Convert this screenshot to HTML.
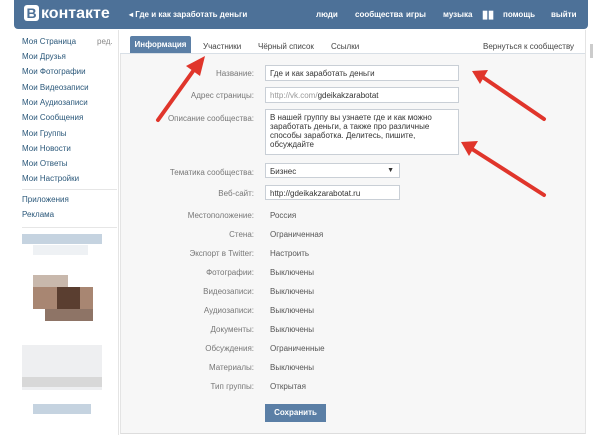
<!DOCTYPE html>
<html><head><meta charset="utf-8"><style>
body{margin:0;width:600px;height:440px;background:#fff;font-family:"Liberation Sans","Noto Sans CJK SC",sans-serif;position:relative;overflow:hidden;font-size:8px;color:#444}
.hdr{position:absolute;left:14px;top:0;width:574px;height:29px;background:#4d7198;border-radius:0 0 4px 4px}
.hdr span{position:absolute;color:#fff;font-weight:bold;font-size:8px;top:10px}
.logo{position:absolute;left:10px;top:5px;color:#fff;font-size:16px;font-weight:bold}
.logo b{display:inline-block;background:#fff;color:#4d7198;width:15px;height:16px;text-align:center;border-radius:3px;font-size:14px;line-height:16px;margin-right:2px}
.m{position:absolute;left:22px;color:#2b587a;font-size:8px}
.panel{position:absolute;left:120px;top:30px;width:464px;height:403px;background:#f7f7f7;border-left:1px solid #e4e4e4;border-right:1px solid #e4e4e4;border-bottom:1px solid #ddd}
.tabs{position:absolute;left:120px;top:30px;width:465px;height:23px;background:#fff;border-bottom:1px solid #d8dfe6}
.t{position:absolute;top:42px;font-size:8px;color:#444}
.l{position:absolute;right:346px;font-size:8px;color:#777;text-align:right;white-space:nowrap}
.v{position:absolute;left:270px;font-size:8px;color:#555}
.in{position:absolute;left:265px;background:#fff;border:1px solid #c9cfd6;font-size:8px;color:#333;padding:3px 4px;box-sizing:border-box}
</style></head><body>
<div class="hdr">
<div class="logo"><b>B</b>контакте</div>
<span style="left:115px">◂ Где и как заработать деньги</span>
<span style="left:302px">люди</span><span style="left:341px">сообщества</span><span style="left:392px">игры</span><span style="left:429px">музыка</span>
<span style="left:468px;top:8px;font-size:11px">▮▮</span>
<span style="left:489px">помощь</span><span style="left:537px">выйти</span>
</div>
<div class="m" style="top:37px">Моя Страница</div><div class="m" style="top:37px;left:97px;color:#888">ред.</div>
<div class="m" style="top:52px">Мои Друзья</div>
<div class="m" style="top:67px">Мои Фотографии</div>
<div class="m" style="top:83px">Мои Видеозаписи</div>
<div class="m" style="top:98px">Мои Аудиозаписи</div>
<div class="m" style="top:113px">Мои Сообщения</div>
<div class="m" style="top:129px">Мои Группы</div>
<div class="m" style="top:144px">Мои Новости</div>
<div class="m" style="top:159px">Мои Ответы</div>
<div class="m" style="top:174px">Мои Настройки</div>
<div style="position:absolute;left:22px;top:189px;width:95px;border-top:1px solid #e6e6e6"></div>
<div class="m" style="top:195px">Приложения</div>
<div class="m" style="top:210px">Реклама</div>
<div style="position:absolute;left:22px;top:227px;width:95px;border-top:1px solid #e6e6e6"></div>
<div style="position:absolute;left:22px;top:234px;width:80px;height:10px;background:#c5d3e0"></div>
<div style="position:absolute;left:33px;top:245px;width:55px;height:10px;background:#eef1f4"></div>
<div style="position:absolute;left:33px;top:275px;width:35px;height:12px;background:#c8b8ac"></div>
<div style="position:absolute;left:33px;top:287px;width:60px;height:22px;background:#a88672"></div>
<div style="position:absolute;left:57px;top:287px;width:23px;height:22px;background:#5a3e30"></div>
<div style="position:absolute;left:45px;top:309px;width:48px;height:12px;background:#8e7466"></div>
<div style="position:absolute;left:22px;top:345px;width:80px;height:45px;background:#eeeff1"></div>
<div style="position:absolute;left:22px;top:377px;width:80px;height:10px;background:#d8d8d8"></div>
<div style="position:absolute;left:33px;top:404px;width:58px;height:10px;background:#c5d3e0"></div>
<div style="position:absolute;left:118px;top:30px;height:405px;border-left:1px solid #e4e4e4"></div>
<div class="panel"></div>
<div class="tabs"></div>
<div style="position:absolute;left:130px;top:36px;width:61px;height:17px;background:#5b7fa6;border-radius:2px 2px 0 0;color:#fff;font-weight:bold;font-size:8px;text-align:center;line-height:17px">Информация</div>
<div class="t" style="left:203px">Участники</div><div class="t" style="left:258px">Чёрный список</div><div class="t" style="left:331px">Ссылки</div><div class="t" style="left:483px">Вернуться к сообществу</div>
<div style="position:absolute;left:590px;top:44px;width:3px;height:14px;background:#ccc"></div>
<div class="l" style="top:69px">Название:</div><div class="in" style="top:65px;width:194px;height:16px">Где и как заработать деньги</div>
<div class="l" style="top:91px">Адрес страницы:</div><div class="in" style="top:87px;width:194px;height:16px;color:#999">http://vk.com/<span style="color:#333">gdeikakzarabotat</span></div>
<div class="l" style="top:114px">Описание сообщества:</div><div class="in" style="top:109px;width:194px;height:46px;line-height:9px">В нашей группу вы узнаете где и как можно заработать деньги, а также про различные способы заработка. Делитесь, пишите, обсуждайте</div>
<div class="l" style="top:168px">Тематика сообщества:</div><div class="in" style="top:163px;width:135px;height:15px">Бизнес<span style="position:absolute;right:5px;top:3px;font-size:7px">▼</span></div>
<div class="l" style="top:189px">Веб-сайт:</div><div class="in" style="top:185px;width:135px;height:15px">http://gdeikakzarabotat.ru</div>
<div class="l" style="top:211px">Местоположение:</div><div class="v" style="top:211px">Россия</div>
<div class="l" style="top:230px">Стена:</div><div class="v" style="top:230px">Ограниченная</div>
<div class="l" style="top:249px">Экспорт в Twitter:</div><div class="v" style="top:249px">Настроить</div>
<div class="l" style="top:268px">Фотографии:</div><div class="v" style="top:268px">Выключены</div>
<div class="l" style="top:287px">Видеозаписи:</div><div class="v" style="top:287px">Выключены</div>
<div class="l" style="top:306px">Аудиозаписи:</div><div class="v" style="top:306px">Выключены</div>
<div class="l" style="top:325px">Документы:</div><div class="v" style="top:325px">Выключены</div>
<div class="l" style="top:344px">Обсуждения:</div><div class="v" style="top:344px">Ограниченные</div>
<div class="l" style="top:363px">Материалы:</div><div class="v" style="top:363px">Выключены</div>
<div class="l" style="top:382px">Тип группы:</div><div class="v" style="top:382px">Открытая</div>
<div style="position:absolute;left:265px;top:404px;width:61px;height:18px;background:#5b7fa6;color:#fff;font-weight:bold;font-size:8px;text-align:center;line-height:18px">Сохранить</div>
<svg style="position:absolute;left:0;top:0" width="600" height="440">
<g stroke="#e0352b" stroke-width="4" stroke-linecap="round" fill="#e0352b">
<line x1="158" y1="120" x2="196" y2="67"/>
<line x1="544" y1="119" x2="484" y2="78"/>
<line x1="544" y1="195" x2="472" y2="149"/>
</g>
<g fill="#e0352b">
<polygon points="205,56 186,66 200,76"/>
<polygon points="472,71 488,70 480,84"/>
<polygon points="461,142 478,141 469,156"/>
</g>
</svg>
</body></html>
